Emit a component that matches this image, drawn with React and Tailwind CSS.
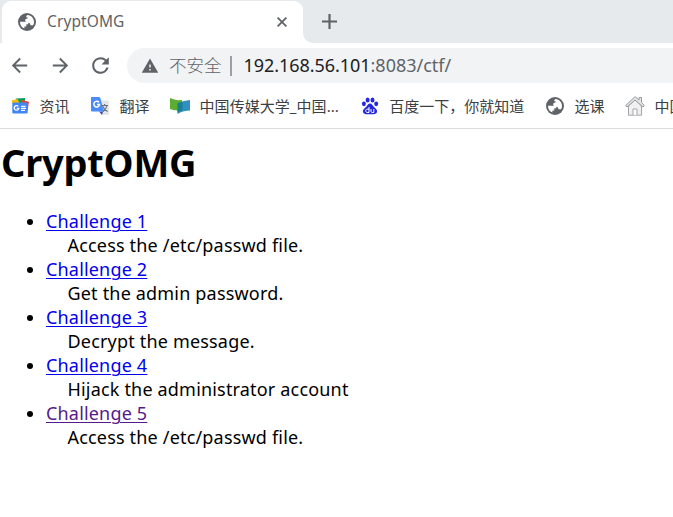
import React from "react";
import { MdArrowBack, MdArrowForward, MdRefresh, MdWarning } from "react-icons/md";

const challenges = [
  { name: "Challenge 1", text: "Access the /etc/passwd file." },
  { name: "Challenge 2", text: "Get the admin password." },
  { name: "Challenge 3", text: "Decrypt the message." },
  { name: "Challenge 4", text: "Hijack the administrator account" },
  { name: "Challenge 5", text: "Access the /etc/passwd file.", visited: true },
];

function Globe() {
  return (
    <svg viewBox="0 0 18 18" className="size-[18px] shrink-0">
      <circle cx="9" cy="9" r="9" fill="#5f6368" />
      <path fill="#fff" d="M2 8.800H6.500c2.400 0 4 .8 4 2.400H8.300v2.400H6.400v2C3.600 14.600 2 12.200 2 8.800zM9.600 2C13.200 2.200 16 5.300 16 9c0 1.300-.3 2.300-.9 3.200H12.500c-.2-1.500-.8-2.100-2-2.400-1.700-.4-3.300-1-3.300-2.400 0-1.200 1-1.900 2.300-1.900V4.200H8.200C8.200 3 8.800 2.300 9.600 2z" />
    </svg>
  );
}

function NewsIcon() {
  return (
    <svg viewBox="0 0 18 18" className="h-[18px] w-[18px]">
      <path fill="#0f9d58" d="M5 1.500 14 1v7H5z" />
      <path fill="#fbbc04" d="m.500 3.500 6-1.500 3 6H2z" />
      <path fill="#ea4335" d="m11 3 7 1.800-1.500 9-6-3z" />
      <rect x="1.300" y="5.500" width="15.400" height="11" rx="1" fill="#4285f4" />
      <path fill="none" stroke="#fff" strokeWidth="1.300" d="M7.300 9.400a2.300 2.300 0 1 0 .5 2H5.800M10 9.300h4.500M10 11.300h5M10 13.300h4" />
    </svg>
  );
}

function TranslateIcon() {
  return (
    <svg viewBox="0 0 20 20" className="h-5 w-5">
      <path fill="#e3e5e8" d="M8 4.500h10q1 0 1 1V18q0 1-1 1h-6z" />
      <path fill="#3949ab" d="m9 15.500 4 0L12 19z" />
      <path fill="#4c8bf5" d="M1.500 1H9q1 0 1.300 1L14 15.500H2q-1 0-1-1V2q0-1 .5-1z" />
      <path fill="none" stroke="#fff" strokeWidth="1.500" d="M9 6.300A2.900 2.900 0 1 0 9.600 8.500H7" />
      <path fill="none" stroke="#6b7075" strokeWidth="1.100" d="M11.500 9.500H18M14.600 8v1.500M17 9.500c-.5 3-2 4.500-4 6M13 10.500c.8 2.500 2.500 4 4.500 5" />
    </svg>
  );
}

function BookIcon() {
  return (
    <svg viewBox="0 0 20 18" className="h-[18px] w-5">
      <path fill="#5cad31" d="M0 1c3 1.500 7 2.500 12 2V13C7 14 3 13 0 12z" />
      <path fill="#308fc4" d="M7.500 6.500C12 4 16 3.500 20 3v10.500c-4 0-8 .5-12.500 3.500z" />
      <path fill="#17828e" d="M7.500 6.300c2-.8 3.500-1.200 5-1.600V13c-2 .7-3.500 1.500-5 2.500z" />
    </svg>
  );
}

function BaiduIcon() {
  return (
    <svg viewBox="0 0 18 18" className="size-[18px]">
      <g fill="#2428e0">
        <ellipse cx="6.600" cy="3" rx="2" ry="2.600" />
        <ellipse cx="11.500" cy="3" rx="2" ry="2.600" />
        <ellipse cx="2.900" cy="6.800" rx="2" ry="2.400" />
        <ellipse cx="15.200" cy="6.800" rx="2" ry="2.400" />
        <path d="M9 6.500c2 0 2.500 2 4 3.500 2 1.700 3.500 3 3 5-.6 2.600-3.500 2.200-7 2.200s-6.400.4-7-2.200c-.5-2 1-3.300 3-5C6.500 8.500 7 6.500 9 6.500z" />
      </g>
      <path fill="none" stroke="#fff" strokeWidth="1" d="M8 10v5.500H6.200c-2 0-2-3.300 0-3.300H8M10 12v2.300q0 1.200 1.200 1.200h1.600V12" />
    </svg>
  );
}

function HomeIcon() {
  return (
    <svg viewBox="0 0 20 20" className="size-5">
      <path fill="#f0f0f1" stroke="#a3a5a8" strokeWidth="1" strokeLinejoin="round" d="M3.500 10v9.200h13V10L10 3.500z" />
      <path fill="#e6e7e8" stroke="#96989b" strokeWidth="1" strokeLinejoin="round" d="M14 4V1.500h2.500v5L19.300 9.500 18 11 10 4l-8 7L.7 9.500 10 .7z" />
      <path fill="#fff" stroke="#a3a5a8" d="M8 19v-6h4v6" />
    </svg>
  );
}

function Bookmark({ icon, label, className = "" }) {
  return (
    <div className={"flex shrink-0 items-center whitespace-nowrap " + className}>
      <span className="flex w-5 shrink-0 items-center justify-center">{icon}</span>
      <span className="ml-[9.500px]">{label}</span>
    </div>
  );
}

export default function App() {
  return (
    <div lang="zh-CN" className="h-[517px] w-[673px] overflow-hidden bg-white font-['Noto_Sans','Noto_Sans_CJK_SC',sans-serif] text-black">
      <div className="flex h-[43px] bg-[#e7eaed]">
        <div className="mt-px ml-[2px] flex h-[42px] w-[301px] items-center rounded-t-[9px] bg-white pl-4">
          <Globe />
          <span className="ml-[11px] text-[15.500px] tracking-[0.1px] text-[#5f6368]">CryptOMG</span>
          <svg viewBox="0 0 10 10" className="mr-[16px] ml-auto size-[10px]"><path stroke="#5f6368" strokeWidth="1.800" d="m.6.600 8.800 8.800M9.400.600.6 9.400" /></svg>
        </div>
        <div className="flex h-[43px] flex-1 items-end bg-white">
          <div className="flex h-[43px] flex-1 items-center rounded-bl-[10px] bg-[#e7eaed] pl-[19px]">
            <svg viewBox="0 0 15 15" className="size-[15px]"><path stroke="#5f6368" strokeWidth="2.200" d="M7.500 0v15M0 7.500h15" /></svg>
          </div>
        </div>
      </div>

      <div className="flex h-[45px] items-center text-[#5f6368]">
        <MdArrowBack className="ml-[8px] size-[23px]" />
        <MdArrowForward className="ml-[18px] size-[23px]" />
        <MdRefresh className="ml-[16px] size-[25px]" />
        <div className="ml-[14px] flex h-[35px] flex-1 items-center rounded-l-full bg-[#f1f3f4] pl-[14px] text-[18px] whitespace-nowrap">
          <MdWarning className="size-[18px]" />
          <span className="ml-[10px] text-[17.500px] font-light">不安全</span>
          <span className="ml-[8px] h-5 w-[2px] bg-[#9aa0a6]" />
          <span className="ml-[12px] tracking-[-0.05px] text-[#202124]">192.168.56.101</span>
          <span>:8083/ctf/</span>
        </div>
      </div>

      <div className="flex h-[41px] items-center overflow-hidden border-b border-[#dadce0] pb-[4px] text-[15px] text-[#3c4043]">
        <Bookmark icon={<NewsIcon />} label="资讯" className="ml-[10px]" />
        <Bookmark icon={<TranslateIcon />} label="翻译" className="ml-[20.500px]" />
        <Bookmark icon={<BookIcon />} label="中国传媒大学_中国..." className="ml-[20.500px] tracking-[0.05px]" />
        <Bookmark icon={<BaiduIcon />} label="百度一下，你就知道" className="ml-[21px]" />
        <Bookmark icon={<Globe />} label="选课" className="ml-[20.500px]" />
        <Bookmark icon={<HomeIcon />} label="中国" className="ml-[20.500px]" />
      </div>

      <main>
        <h1 className="mt-[6px] h-[54px] pl-px text-[38px] leading-[54px] font-bold whitespace-nowrap tracking-[-0.2px]">CryptOMG</h1>
        <ul className="mt-[20px] pl-[46px] text-[18px] leading-6 tracking-[0.18px]">
          {challenges.map((c) => (
            <li key={c.name}>
              <div className="-ml-[19px] flex h-6 items-center">
                <span className="mt-[2px] mr-[13px] size-[6px] rounded-full bg-black" />
                <a className={"underline decoration-1 underline-offset-2 " + (c.visited ? "text-[#551a8b]" : "text-[#0000ee]")}>{c.name}</a>
              </div>
              <div className="h-6 pl-[21.500px] whitespace-nowrap">{c.text}</div>
            </li>
          ))}
        </ul>
      </main>
    </div>
  );
}
